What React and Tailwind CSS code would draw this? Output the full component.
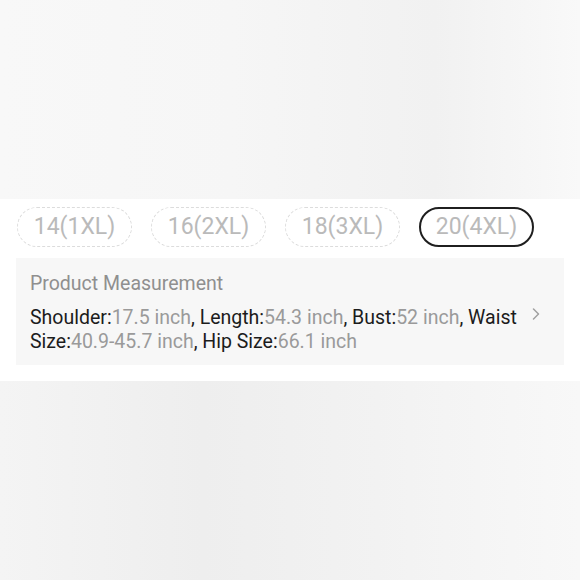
import { ChevronRight } from "lucide-react";

const sizes = ["14(1XL)", "16(2XL)", "18(3XL)", "20(4XL)"];
const specs = [
  ["Shoulder", "17.5 inch"],
  ["Length", "54.3 inch"],
  ["Bust", "52 inch"],
  ["Waist Size", "40.9-45.7 inch"],
  ["Hip Size", "66.1 inch"],
];

export default function App() {
  const selected = 3;
  return (
    <div className="w-[580px] h-[580px] flex flex-col bg-white overflow-hidden" style={{ fontFamily: "Roboto, 'Liberation Sans', sans-serif" }}>
      <div className="h-[199px] shrink-0 bg-[linear-gradient(90deg,#f8f8f8_0%,#f6f6f6_40%,#f1f1f1_75%,#f9f9f9_100%)]" />
      <div className="h-[182px] shrink-0 bg-white flex flex-col">
        <div className="flex gap-[19px] pl-[17px] pt-[8px]">
          {sizes.map((s, i) => (
            <div
              key={s}
              className={
                "w-[115px] h-[40px] rounded-full flex items-center justify-center text-[23px] text-[#bababa] " +
                (i === selected ? "border-2 border-[#1f1f1f]" : "border border-dashed border-[#dcdcdc]")
              }
            >
              {s}
            </div>
          ))}
        </div>
        <div className="mx-[16px] mt-[11px] h-[107px] bg-[#f7f7f7] pl-[14px] pr-[10px] pt-[13px] flex flex-col">
          <div className="text-[19.5px] leading-[26px] text-[#8f8f8f]">Product Measurement</div>
          <div className="flex mt-[9px]">
            <div className="w-[494px] text-[19.5px] leading-[24px] text-[#1c1c1c]">
              {specs.map(([k, v], i) => (
                <span key={k}>
                  {k}:<span className="text-[#9a9a9a]">{v}</span>
                  {i < specs.length - 1 ? ", " : ""}
                </span>
              ))}
            </div>
            <ChevronRight className="ml-[2px] mt-[-2px] text-[#a0a0a0]" size={20} strokeWidth={1.8} />
          </div>
        </div>
      </div>
      <div className="flex-1 bg-[linear-gradient(90deg,#f4f4f4_0%,#eeeeee_35%,#f2f2f2_65%,#f8f8f8_100%)]" />
    </div>
  );
}
